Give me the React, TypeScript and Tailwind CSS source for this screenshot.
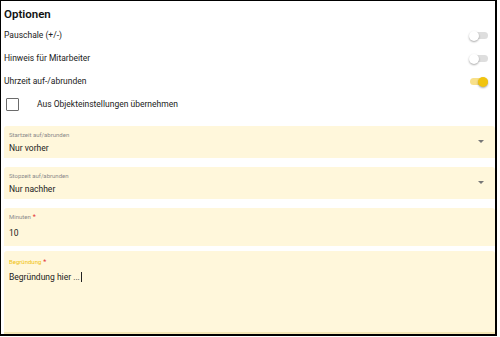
function Toggle({ on }: { on?: boolean }) {
  return (
    <div className="relative mr-[7px] h-[12px] w-[19px]">
      <div
        className={`absolute left-[1px] top-[2.5px] h-[7px] w-[18px] rounded-full ${on ? "bg-[#f8e08a]" : "bg-[#dedede]"}`}
      />
      <div
        className={`absolute top-[1px] h-[10px] w-[10px] rounded-full shadow-[0_1px_2px_rgba(0,0,0,0.35)] ${on ? "left-[9px] bg-[#f1c40f]" : "left-0 bg-white"}`}
      />
    </div>
  );
}

function Field({
  label,
  value,
  required,
  select,
  active,
  className = "",
  valueGap = "mt-[2px]",
}: {
  label: string;
  value: string;
  required?: boolean;
  select?: boolean;
  active?: boolean;
  className?: string;
  valueGap?: string;
}) {
  return (
    <div className={`relative rounded-t-[3px] bg-[#fff7db] px-[5px] ${className}`}>
      <div className={`text-[6px] leading-[10px] ${active ? "text-[#f0c20e]" : "text-[#8a8a8a]"}`}>
        {label}
        {required && <span className="ml-[2px] text-[7px] text-[#e53935]">*</span>}
      </div>
      <div className={`${valueGap} text-[8.5px] leading-[12px] text-[#222]`}>
        {value}
        {active && <span className="ml-[1px] inline-block h-[10px] w-[1px] translate-y-[2px] bg-[#222]" />}
      </div>
      {select && (
        <div className="absolute right-[11px] top-[14px] h-0 w-0 border-x-[3px] border-t-[3px] border-x-transparent border-t-[#777]" />
      )}
    </div>
  );
}

export default function App() {
  return (
    <div
      className="h-[337px] w-[500px] overflow-hidden bg-white"
      style={{ fontFamily: "Roboto, 'Liberation Sans', sans-serif" }}
    >
      <div className="flex h-[336px] w-[497px] flex-col border-b-2 border-l border-r-2 border-t border-black pl-[3px]">
        <h2 className="mt-[3px] h-[20px] text-[11.5px] font-semibold leading-[20px] text-[#111]">Optionen</h2>

        <div className="flex h-[23px] items-center justify-between text-[8.5px] text-[#222]">
          <span>Pauschale (+/-)</span>
          <Toggle />
        </div>
        <div className="flex h-[23px] items-center justify-between text-[8.5px] text-[#222]">
          <span>Hinweis für Mitarbeiter</span>
          <Toggle />
        </div>
        <div className="flex h-[23px] items-center justify-between text-[8.5px] text-[#222]">
          <span>Uhrzeit auf-/abrunden</span>
          <Toggle on />
        </div>
        <div className="flex h-[23px] items-center text-[8.5px] text-[#222]">
          <div className="ml-[2px] h-[13px] w-[13px] rounded-[1px] border-[1.5px] border-[#6b6b6b]" />
          <span className="ml-[18px]">Aus Objekteinstellungen übernehmen</span>
        </div>

        <Field className="mt-[10px] h-[32px] pt-[4px]" label="Startzeit auf/abrunden" value="Nur vorher" select />
        <Field className="mt-[9px] h-[32px] pt-[4px]" label="Stopzeit auf/abrunden" value="Nur nachher" select />
        <Field
          className="mt-[9px] h-[38px] pt-[4px]"
          label="Minuten"
          value="10"
          required
          valueGap="mt-[5px]"
        />
        <Field
          className="mt-[5px] flex-1 border-b-2 border-[#f3e6b5] pt-[6px]"
          label="Begründung"
          value="Begründung hier ..."
          required
          active
          valueGap="mt-[3px]"
        />
      </div>
    </div>
  );
}
